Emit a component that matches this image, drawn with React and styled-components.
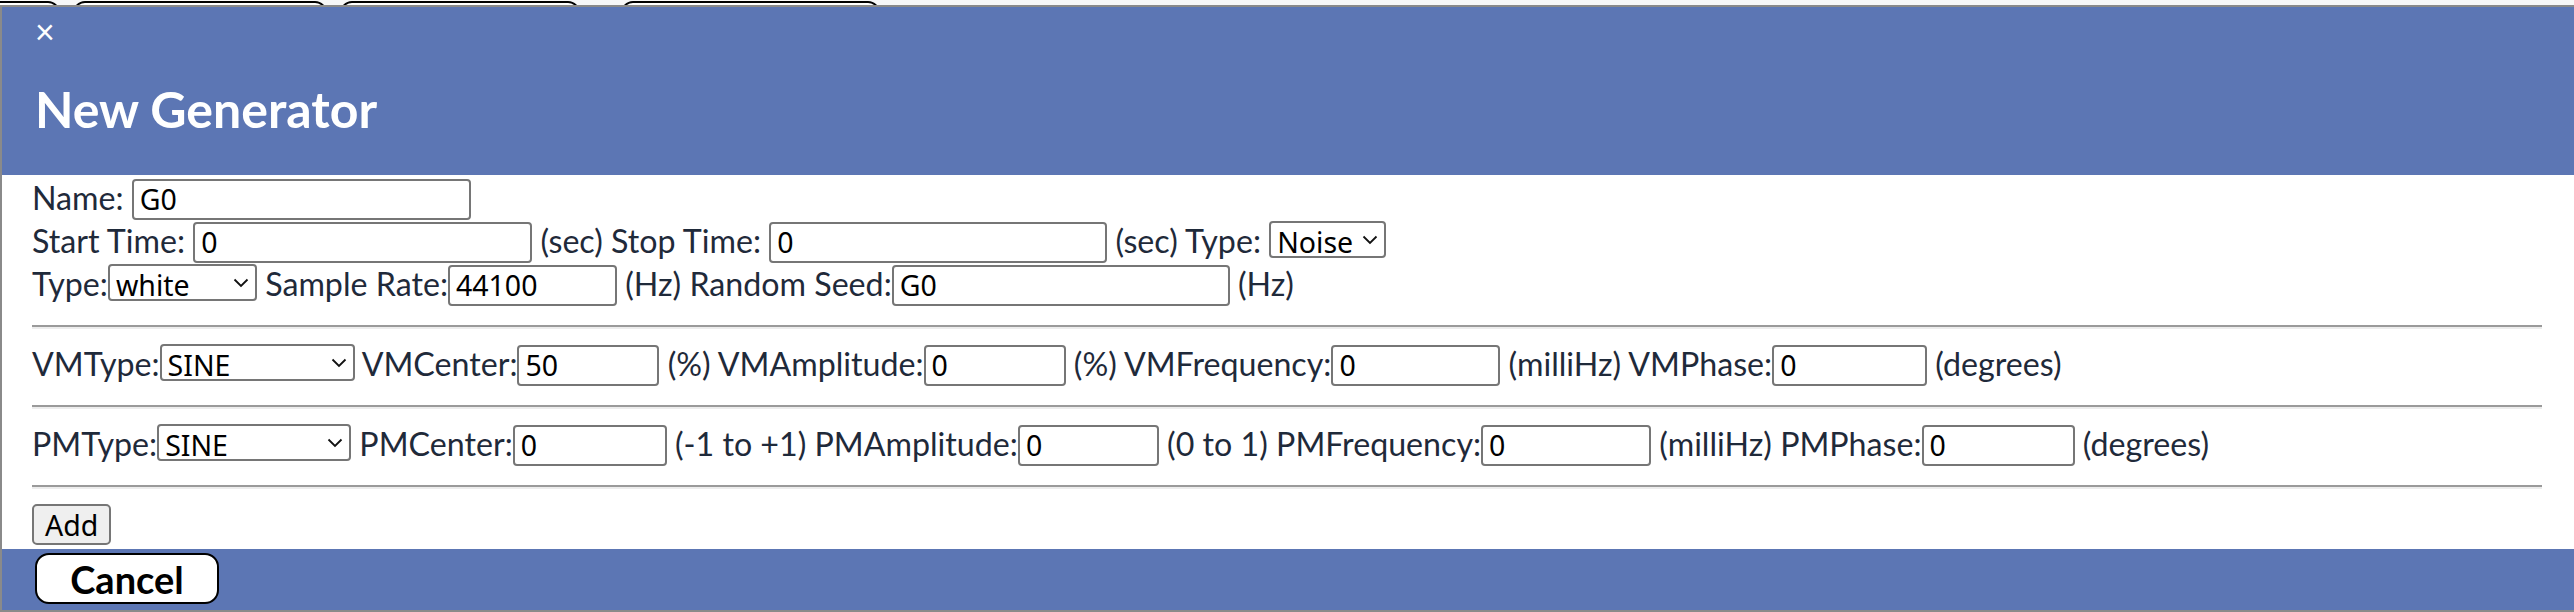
import React from 'react';
import styled, { createGlobalStyle } from 'styled-components';

const GlobalStyle = createGlobalStyle`
    html, body {
        margin: 0;
        padding: 0;
        background: #f4f4f4;
    }
    * {
        box-sizing: border-box;
    }
`;

const BLUE = '#5c76b4';
const LABEL = '#1f2a3a';
const FONT = `Lato, "Noto Sans", sans-serif`;
const CONTROL_FONT = `"Noto Sans", "Open Sans", sans-serif`;

const tabs = [
    { ml: -40, w: 100 },
    { ml: 13, w: 254 },
    { ml: 13, w: 240 },
    { ml: 41, w: 259 }
];

export default class App extends React.Component {
    render() {
        return (
            <Page>
                <GlobalStyle />
                <TabStrip>
                    {tabs.map((t, i) => <BgTab key={i} $ml={t.ml} $w={t.w} />)}
                </TabStrip>
                <Modal>
                    <Header>
                        <Close>×</Close>
                        <Title>New Generator</Title>
                    </Header>
                    <Body>
                        <Row>Name: <Input $w={339} defaultValue="G0" /></Row>
                        <Row>
                            Start Time: <Input $w={339} defaultValue="0" /> (sec) Stop Time: <Input $w={338} defaultValue="0" /> (sec) Type: <Select $w={117} value="Noise" options={['Noise', 'Sine']} />
                        </Row>
                        <Row>
                            Type:<Select $w={149} value="white" options={['white', 'pink']} /> Sample Rate:<Input $w={169} defaultValue="44100" /> (Hz) Random Seed:<Input $w={338} defaultValue="G0" /> (Hz)
                        </Row>
                        <Rule />
                        <Row>
                            VMType:<Select $w={195} value="SINE" options={['SINE', 'SQUARE']} /> VMCenter:<Input $w={142} defaultValue="50" /> (%) VMAmplitude:<Input $w={142} defaultValue="0" /> (%) VMFrequency:<Input $w={169} defaultValue="0" /> (milliHz) VMPhase:<Input $w={155} defaultValue="0" /> (degrees)
                        </Row>
                        <Rule />
                        <Row>
                            PMType:<Select $w={194} value="SINE" options={['SINE', 'SQUARE']} /> PMCenter:<Input $w={154} defaultValue="0" /> (-1 to +1) PMAmplitude:<Input $w={141} defaultValue="0" /> (0 to 1) PMFrequency:<Input $w={170} defaultValue="0" /> (milliHz) PMPhase:<Input $w={153} defaultValue="0" /> (degrees)
                        </Row>
                        <Rule />
                        <Row>
                            <AddButton>Add</AddButton>
                        </Row>
                    </Body>
                    <Footer>
                        <CancelButton>Cancel</CancelButton>
                    </Footer>
                </Modal>
            </Page>
        );
    }
};

const Select = ({ $w, value, options }) => (
    <SelectWrap $w={$w}>
        <SelectBox defaultValue={value}>
            {options.map(o => <option key={o}>{o}</option>)}
        </SelectBox>
        <Chevron width="16" height="10" viewBox="0 0 16 10">
            <path d="M1.5 1.5 L8 8 L14.5 1.5" fill="none" stroke="#111" strokeWidth="1.8" />
        </Chevron>
    </SelectWrap>
);

const Page = styled('div')`
    width: 2574px;
    height: 612px;
    overflow: hidden;
    font-family: ${FONT};
`;

const TabStrip = styled('div')`
    display: flex;
    height: 5px;
    overflow: hidden;
    background: #f7f7f7;
`;

const BgTab = styled('div')`
    flex: none;
    margin-left: ${props => props.$ml}px;
    width: ${props => props.$w}px;
    height: 40px;
    margin-top: 1px;
    border: 2px solid #000;
    border-radius: 12px;
    background: #fff;
`;

const Modal = styled('div')`
    border-top: 2px solid #8a8a8a;
    border-left: 2px solid #8a8a8a;
    border-bottom: 2px solid #8a8a8a;
    display: flex;
    flex-direction: column;
`;

const Header = styled('div')`
    height: 168px;
    background: ${BLUE};
    color: #fff;
    padding-left: 33px;
    display: flex;
    flex-direction: column;
    align-items: flex-start;
`;

const Close = styled('span')`
    margin-top: 7px;
    font-size: 34px;
    line-height: 1;
    cursor: pointer;
`;

const Title = styled('h2')`
    margin: 36px 0 0 0;
    font-size: 50px;
    line-height: 1;
    font-weight: 700;
`;

const Body = styled('div')`
    height: 374px;
    background: #fff;
    padding: 3px 32px 0 30px;
    color: ${LABEL};
    font-size: 32.2px;
`;

const Row = styled('div')`
    height: 43px;
    white-space: nowrap;
    line-height: normal;
`;

const Input = styled('input')`
    width: ${props => props.$w}px;
    height: 41px;
    padding: 0 6px;
    border: 2px solid #767676;
    border-radius: 4px;
    font-family: ${CONTROL_FONT};
    font-size: 28.5px;
    color: #000;
    background: #fff;
    outline: none;
`;

const SelectWrap = styled('span')`
    position: relative;
    display: inline-block;
    width: ${props => props.$w}px;
`;

const SelectBox = styled('select')`
    appearance: none;
    width: 100%;
    height: 37px;
    padding: 0 30px 0 6px;
    border: 2px solid #767676;
    border-radius: 4px;
    background: #fff;
    font-family: ${CONTROL_FONT};
    font-size: 28.5px;
    color: #000;
    outline: none;
`;

const Chevron = styled('svg')`
    position: absolute;
    right: 8px;
    top: 14px;
    pointer-events: none;
`;

const Rule = styled('hr')`
    margin: 18px 0 15px;
    height: 0;
    border: none;
    border-top: 2px solid #9a9a9a;
    border-bottom: 2px solid #ededed;
`;

const AddButton = styled('button')`
    height: 41px;
    padding: 0 11px;
    border: 2px solid #767676;
    border-radius: 5px;
    background: #efefef;
    font-family: ${CONTROL_FONT};
    font-size: 28.5px;
    color: #000;
`;

const Footer = styled('div')`
    height: 61px;
    background: ${BLUE};
    padding: 4px 0 0 33px;
`;

const CancelButton = styled('button')`
    width: 184px;
    height: 51px;
    border: 2.5px solid #000;
    border-radius: 14px;
    background: #fff;
    font-family: ${FONT};
    font-weight: 700;
    font-size: 38px;
    color: #000;
    padding: 0;
`;
